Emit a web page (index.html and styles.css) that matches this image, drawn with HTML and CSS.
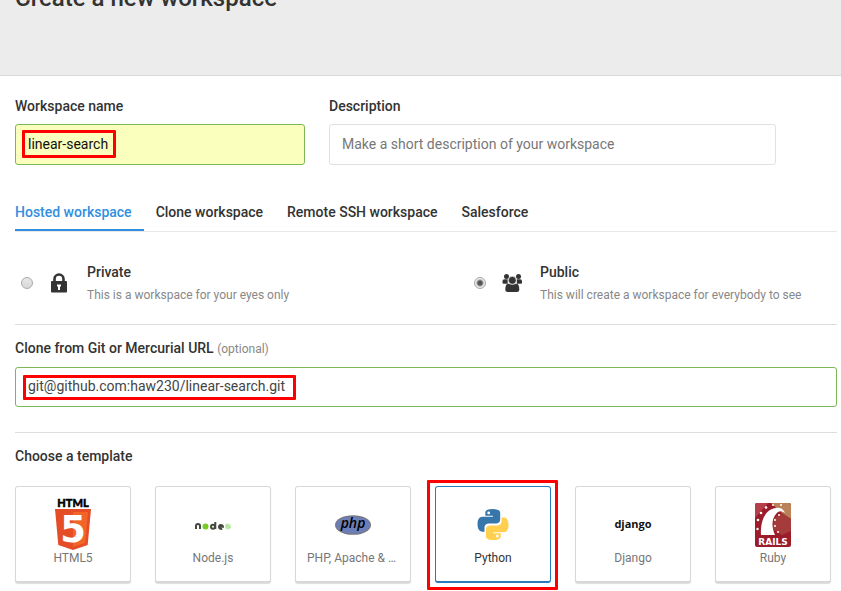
FILE: index.html
```html
<!DOCTYPE html>
<html lang="en">
<head>
<meta charset="utf-8">
<meta name="viewport" content="width=device-width, initial-scale=1">
<title>Create a new workspace</title>
<link rel="stylesheet" href="styles.css">
</head>
<body>
<header class="page-header">
  <h1>Create a new workspace</h1>
</header>
<main>
  <form class="workspace-form">
    <div class="details">
      <div class="field">
        <label for="name">Workspace name</label>
        <div class="control">
          <input class="valid filled" id="name" type="text" value="linear-search">
          <span class="mark mark-name"></span>
        </div>
      </div>
      <div class="field">
        <label for="description">Description</label>
        <div class="control">
          <input id="description" type="text" placeholder="Make a short description of your workspace">
        </div>
      </div>
    </div>

    <nav class="tabs">
      <a class="active" href="#hosted">Hosted workspace</a>
      <a href="#clone">Clone workspace</a>
      <a href="#ssh">Remote SSH workspace</a>
      <a href="#salesforce">Salesforce</a>
    </nav>

    <div class="visibility">
      <label class="option" for="private">
        <input type="radio" id="private" name="visibility">
        <svg class="icon" viewBox="0 0 20 20" aria-hidden="true">
          <path d="M5.500 10V6a4.500 4.500 0 0 1 9 0v4" fill="none" stroke="#333" stroke-width="2.600"/>
          <rect x="2" y="8" width="16" height="11.500" rx="1" fill="#333"/>
          <path d="M8 11.500h4v2h-1v3.500H9v-3.500H8z" fill="#fff"/>
        </svg>
        <span class="option-text"><strong>Private</strong><small>This is a workspace for your eyes only</small></span>
      </label>
      <label class="option" for="public">
        <input type="radio" id="public" name="visibility" checked>
        <svg class="icon" viewBox="0 0 20 20" aria-hidden="true">
          <g fill="#333">
            <circle cx="4.500" cy="3.500" r="2.500"/><circle cx="16.500" cy="3.500" r="2.500"/>
            <path d="M.5 10V8q0-1.800 2-1.800h3.200v4.500H2Q.5 10.700.5 10zM20 10V8q0-1.800-2-1.800h-3.200v4.500H18.500q1.500 0 1.500-.7z"/>
            <circle cx="10.300" cy="7.300" r="4" stroke="#fff" stroke-width=".7"/>
            <path d="M3.300 16.500c0-4 1-5.800 3-5.800 1 0 2 1 4 1s3-1 4-1c2 0 3 1.800 3 5.800 0 1.700-1 2.500-2.500 2.500h-9c-1.500 0-2.500-.8-2.500-2.500z"/>
          </g>
        </svg>
        <span class="option-text"><strong>Public</strong><small>This will create a workspace for everybody to see</small></span>
      </label>
    </div>

    <div class="field clone">
      <label for="url">Clone from Git or Mercurial URL <small>(optional)</small></label>
      <div class="control">
        <input class="valid short" id="url" type="text" value="git@github.com:haw230/linear-search.git">
        <span class="mark mark-url"></span>
      </div>
    </div>

    <section class="templates">
      <h2>Choose a template</h2>
      <div class="cards">
        <button class="card" type="button">
          <svg viewBox="0 0 60 60" aria-hidden="true">
            <text x="30" y="15" class="logo-html" text-anchor="middle">HTML</text>
            <path d="M12 17h36l-3.300 36L30 58l-14.700-5z" fill="#e44d26"/>
            <path d="M30 20h15l-2.800 31L30 55z" fill="#f16529"/>
            <text x="30" y="50" class="logo-five" text-anchor="middle">5</text>
          </svg>
          <span>HTML5</span>
        </button>
        <button class="card" type="button">
          <svg viewBox="0 0 60 60" aria-hidden="true">
            <g fill="none" stroke="#444a40" stroke-width="2">
              <path d="M13 37v-3a2 2 0 0 1 4 0v3"/>
              <circle cx="30" cy="34.700" r="2"/><path d="M32.300 37v-7"/>
              <path d="M36 34.800h4a2 2 0 1 0-.8 1.700"/>
            </g>
            <circle cx="22.500" cy="34.500" r="3" fill="#7c2"/>
            <circle cx="45" cy="34.500" r="3" fill="#c5edb0"/>
            <path d="M44 32.500v3m2-1v2" stroke="#9cdb7c"/>
          </svg>
          <span>Node.js</span>
        </button>
        <button class="card" type="button">
          <svg viewBox="0 0 60 60" aria-hidden="true">
            <ellipse cx="30" cy="33" rx="18" ry="9.800" fill="#777"/>
            <ellipse cx="30" cy="33" rx="17" ry="8.800" fill="#6c7eb7"/>
            <text x="30" y="36" class="logo-php" text-anchor="middle">php</text>
          </svg>
          <span>PHP, Apache &amp; MySQL</span>
        </button>
        <div class="selected">
          <button class="card active" type="button" aria-pressed="true">
            <svg viewBox="0 0 60 60" aria-hidden="true">
              <g transform="translate(14.500 17) scale(.28)">
                <path fill="#3776ab" d="M54 0C27 0 28 12 28 12v12h27v4H18S0 26 0 54s16 27 16 27h9V68s-1-16 15-16h26s15 0 15-15V15S84 0 54 0zM40 9a5 5 0 1 1 0 10 5 5 0 0 1 0-10z"/>
                <path fill="#ffd04f" d="M57 111c27 0 26-12 26-12V87H56v-4h37s18 2 18-26-16-27-16-27h-9v13s1 16-15 16H45s-15 0-15 15v22s-3 15 27 15zm14-9a5 5 0 1 1 0-10 5 5 0 0 1 0 10z"/>
              </g>
            </svg>
            <span>Python</span>
          </button>
          <span class="mark mark-card"></span>
        </div>
        <button class="card" type="button">
          <svg viewBox="0 0 60 60" aria-hidden="true">
            <text x="30" y="36" class="logo-django" text-anchor="middle">django</text>
          </svg>
          <span>Django</span>
        </button>
        <button class="card" type="button">
          <svg viewBox="0 0 60 60" aria-hidden="true">
            <rect x="12" y="11" width="36" height="44" rx="2" fill="#9b1c2b"/>
            <path d="M12 13q0-2 2-2h11L12 26z" fill="#b5404a"/>
            <path d="M28 11h18q2 0 2 2v14l-9-6z" fill="#b98258"/>
            <path d="M31 26l8-5 9 6v12l-9 4-9-6z" fill="#a63b3b"/>
            <path d="M18 43c-1-13 4-26 15-27 5-1 8 2 9 5-4-3-7-2-9 1-5 6-4 14-1 21z" fill="#fff"/>
            <g fill="#fff"><circle cx="14.500" cy="37" r="1.200"/><circle cx="15" cy="28" r="1.300"/><circle cx="18" cy="21" r="1.300"/><circle cx="23" cy="15.500" r="1.300"/><circle cx="30" cy="13" r="1"/><circle cx="38" cy="13" r="1"/><circle cx="36" cy="23" r="1"/><circle cx="32" cy="28" r="1"/><circle cx="32" cy="34" r="1"/><circle cx="35" cy="40" r="1"/></g>
            <text x="30" y="53" class="logo-rails" text-anchor="middle">RAILS</text>
          </svg>
          <span>Ruby</span>
        </button>
      </div>
    </section>
  </form>
</main>
</body>
</html>
```
FILE: styles.css
```css
* {
  box-sizing: border-box;
}

body {
  margin: 0;
  background: #fff;
  color: #333;
  font: 14px/20px Roboto, "Liberation Sans", sans-serif;
}

.page-header {
  height: 76px;
  padding-left: 15px;
  overflow: hidden;
  background: #ececec;
  border-bottom: 1px solid #d9d9d9;
}

h1 {
  margin: -16px 0 0;
  font-size: 24px;
  line-height: 28px;
  font-weight: 500;
}

.workspace-form {
  padding: 20px 4px 8px 15px;
}

.details {
  display: grid;
  grid-template-columns: 290fr 447fr;
  gap: 24px;
  margin-right: 61px;
}

.field label {
  display: block;
  margin-bottom: 8px;
  font-weight: 500;
}

.field small {
  color: #888;
  font-size: 12px;
  font-weight: 400;
}

.control,
.selected {
  position: relative;
}

.control input {
  display: block;
  width: 100%;
  height: 41px;
  padding: 0 12px 2px;
  border: 1px solid #e1e1e1;
  border-radius: 3px;
  background: #fff;
  color: #444;
  font: inherit;
}

.control input::placeholder {
  color: #777;
}

.control .valid {
  border-color: #7db757;
}

.control .filled {
  background: #faffbd;
  color: #111;
}

.control .short {
  height: 40px;
}

.mark {
  position: absolute;
  border: 3px solid #f00;
  border-radius: 1px;
  pointer-events: none;
}

.mark-name {
  top: 6px;
  left: 7px;
  width: 94px;
  height: 28px;
}

.mark-url {
  top: 8px;
  left: 8px;
  width: 273px;
  height: 25px;
}

.mark-card {
  inset: -6px -7px -7px -8px;
}

.tabs {
  display: flex;
  margin-top: 31px;
  border-bottom: 1px solid #e8e8e8;
}

.tabs a {
  padding: 6px 12px 7px;
  border-bottom: 2px solid transparent;
  color: #333;
  font-weight: 500;
  text-decoration: none;
}

.tabs a.active {
  padding-left: 0;
  border-color: #308fdf;
  color: #308fdf;
}

.visibility {
  display: grid;
  grid-template-columns: 453fr 369fr;
  padding: 30px 0 19px;
  border-bottom: 1px solid #ddd;
}

.option {
  display: flex;
  align-items: center;
  padding-left: 6px;
}

.option input {
  appearance: none;
  width: 12px;
  height: 12px;
  margin: 0 16px 2px 0;
  border: 1px solid #aaa;
  border-radius: 50%;
  background: linear-gradient(#e8e8e8, #d8d8d8);
}

.option input:checked {
  background: radial-gradient(circle, #555 0 2px, #e8e8e8 4px);
}

.icon {
  width: 20px;
  height: 20px;
  margin: 0 18px 2px 0;
}

.option-text strong,
.option-text small {
  display: block;
}

.option-text strong {
  font-weight: 500;
}

.option-text small {
  margin-top: 3px;
  color: #888;
  font-size: 12px;
}

.clone {
  padding: 13px 0 25px;
  border-bottom: 1px solid #ddd;
}

h2 {
  margin: 13px 0 20px;
  font-size: 14px;
  line-height: 20px;
  font-weight: 500;
}

.cards {
  display: flex;
  flex-wrap: wrap;
  gap: 24px;
}

.card {
  display: flex;
  flex-direction: column;
  align-items: center;
  justify-content: flex-start;
  width: 116px;
  height: 97px;
  padding: 5px 11px;
  border: 1px solid #d8d8d8;
  border-bottom-width: 2px;
  border-radius: 3px;
  background: #fff;
  box-shadow: 0 1px 1px #ddd;
  color: #777;
  font: 12px/20px Roboto, "Liberation Sans", sans-serif;
}

.card.active {
  border-color: #287cbd;
  box-shadow: none;
  color: #333;
}

.card svg {
  width: 60px;
  height: 60px;
  margin-bottom: -4px;
  flex: none;
}

.card > span {
  max-width: 100%;
  overflow: hidden;
  text-overflow: ellipsis;
  white-space: nowrap;
}

.logo-html {
  font: 900 11px Lato, sans-serif;
  stroke: #000;
  stroke-width: 0.5px;
}

.logo-five {
  fill: #fff;
  font: 900 37px "DejaVu Sans", sans-serif;
}

.logo-php {
  font: italic 600 14px "Open Sans", sans-serif;
}

.logo-django {
  fill: #111;
  font: 700 11px "Open Sans", sans-serif;
}

.logo-rails {
  fill: #fff;
  font: 700 9px "DejaVu Sans", sans-serif;
}
```
